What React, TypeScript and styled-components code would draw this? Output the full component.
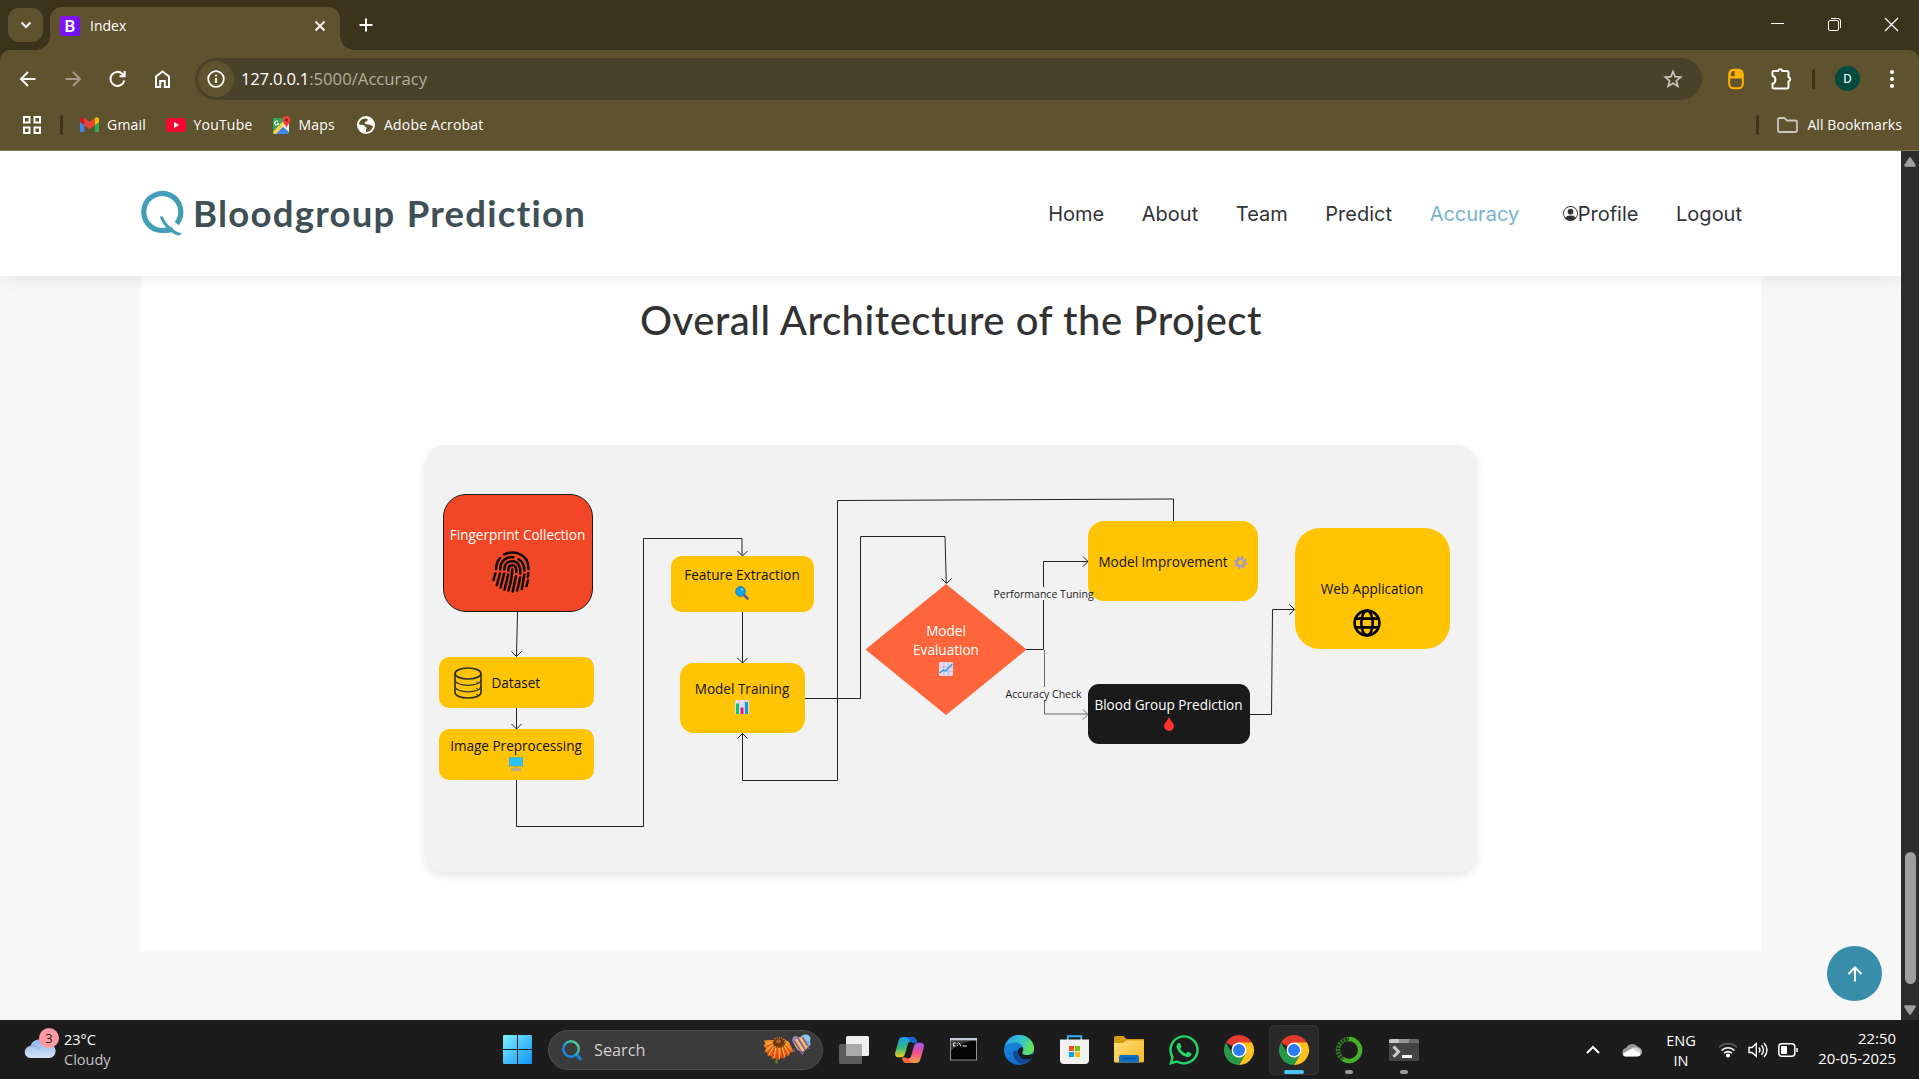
import React from 'react';
import styled, { createGlobalStyle, css } from 'styled-components';
import { FaWhatsapp } from 'react-icons/fa6';
import { BsPersonCircle } from 'react-icons/bs';

const uiFont = '"Open Sans", "Noto Sans", sans-serif';

const GlobalStyle = createGlobalStyle`
  * { box-sizing: border-box; }
  body { margin: 0; overflow: hidden; background: #f7f7f7; }
  svg { display: block; flex: none; overflow: visible; }
`;

const Screen = styled.div`
  display: flex;
  flex-direction: column;
  width: 1919px;
  height: 1079px;
  font-family: ${uiFont};
`;

/* ---------- browser chrome ---------- */

const TabStrip = styled.div`
  display: flex;
  align-items: flex-end;
  height: 50px;
  padding-left: 8px;
  background: #3c331d;
  color: #fff;
`;

const TabSearch = styled.div`
  position: relative;
  z-index: 1;
  display: grid;
  place-items: center;
  width: 35px;
  height: 34px;
  margin-bottom: 8px;
  border-radius: 11px;
  background: #5f522e;
`;

const Tab = styled.div`
  position: relative;
  display: flex;
  align-items: center;
  width: 290px;
  height: 43px;
  margin-left: 7px;
  padding: 0 13px 6px 10px;
  border-radius: 12px 12px 0 0;
  background: #5f522e;

  &::before,
  &::after {
    content: '';
    position: absolute;
    bottom: 0;
    width: 14px;
    height: 14px;
  }
  &::before {
    left: -14px;
    background: radial-gradient(circle at 0 0, #3c331d 13.5px, #5f522e 14px);
  }
  &::after {
    right: -14px;
    background: radial-gradient(circle at 100% 0, #3c331d 13.5px, #5f522e 14px);
  }
`;

const Favicon = styled.div`
  display: grid;
  place-items: center;
  width: 20px;
  height: 20px;
  border-radius: 3px;
  background: linear-gradient(135deg, #9013fe, #6610f2);
  font: 600 17px/20px Roboto, sans-serif;
`;

const TabTitle = styled.span`
  flex: 1;
  margin-left: 10px;
  font-size: 14px;
`;

const NewTab = styled.div`
  display: grid;
  place-items: center;
  width: 35px;
  height: 34px;
  margin: 0 0 8px 8px;
`;

const WindowControls = styled.div`
  display: flex;
  align-items: center;
  height: 48px;
  margin-bottom: 2px;
  margin-left: auto;
  padding-right: 21px;
  gap: 44px;
`;

const Toolbar = styled.div`
  display: flex;
  align-items: center;
  height: 57px;
  padding: 0 0 0 18px;
  background: #5f522e;
  border-radius: 10px 10px 0 0;
  color: #fff;
`;

const ToolbarBack = styled.div`
  background: #3c331d;
`;

const NavButtons = styled.div`
  display: flex;
  gap: 25px;
  width: 177px;
`;

const Omnibox = styled.div`
  display: flex;
  align-items: center;
  width: 1507px;
  height: 42px;
  padding: 0 19px 0 3px;
  border-radius: 21px;
  background: #4a412a;
`;

const SiteInfo = styled.div`
  display: grid;
  place-items: center;
  width: 36px;
  height: 36px;
  margin-right: 7px;
  border-radius: 50%;
  background: #5f522e;
`;

const Url = styled.div`
  flex: 1;
  padding-top: 1px;
  font-size: 16.7px;
  line-height: 24px;
  color: #b5ada0;
  b { font-weight: 400; color: #fff; letter-spacing: -0.25px; }
`;

const Extensions = styled.div`
  display: flex;
  align-items: center;
  margin-left: 26px;
`;

const Divider = styled.div`
  width: 3px;
  height: 20px;
  border-radius: 2px;
  background: #3c331d;
`;

const PuzzleSlot = styled.div`
  margin: 0 18px 0 26px;
`;

const Avatar = styled.div`
  display: grid;
  place-items: center;
  width: 25px;
  height: 25px;
  margin: 0 28px 0 20px;
  border-radius: 50%;
  background: #004d40;
  font: 13px Roboto, sans-serif;
`;

const BookmarkBar = styled.div`
  display: flex;
  align-items: center;
  height: 44px;
  padding: 0 17px 8px 23px;
  border-bottom: 1px solid #85764f;
  background: #5f522e;
  color: #fff;
  & > ${Divider} { margin: 0 17px 0 19px; }
`;

const Bookmark = styled.div<{ $w: number; $gap: number }>`
  display: flex;
  align-items: center;
  gap: ${p => p.$gap}px;
  width: ${p => p.$w}px;
  font-size: 14px;
  letter-spacing: 0.2px;
  white-space: nowrap;
`;

const AllBookmarks = styled.div`
  display: flex;
  align-items: center;
  gap: 9px;
  margin-left: auto;
  font-size: 14px;
  letter-spacing: 0.1px;
  svg { margin-left: 9px; }
`;

/* ---------- web page ---------- */

const Viewport = styled.div`
  display: flex;
  height: 869px;
`;

const Page = styled.div`
  position: relative;
  display: flex;
  flex-direction: column;
  align-items: center;
  width: 1901px;
  background: #f7f7f7;
  overflow: hidden;
`;

const SiteHeader = styled.header`
  position: relative;
  z-index: 1;
  display: flex;
  align-items: center;
  justify-content: space-between;
  width: 100%;
  height: 125px;
  padding: 0 159px 0 141px;
  background: #fff;
  box-shadow: 0 0 18px rgba(0, 0, 0, 0.1);
`;

const Brand = styled.div`
  display: flex;
  align-items: center;
  gap: 9px;
  color: #3e5055;
`;

const BrandName = styled.span`
  padding-bottom: 2px;
  font: 700 36.5px/50px Lato, sans-serif;
  letter-spacing: 1.25px;
  word-spacing: 1px;
`;

const SiteNav = styled.nav`
  display: flex;
  gap: 37.6px;
  font: 20px/30px Inter, sans-serif;
`;

const NavLink = styled.a<{ $active?: boolean; $icon?: boolean }>`
  display: flex;
  align-items: center;
  margin-left: ${p => (p.$icon ? 6 : 0)}px;
  color: ${p => (p.$active ? '#76b5cc' : '#313336')};
`;

const Section = styled.main`
  display: flex;
  flex-direction: column;
  align-items: center;
  width: 1620px;
  height: 675px;
  padding-top: 19px;
  background: #fff;
`;

const Heading = styled.h2`
  margin: 0;
  padding-left: 1px;
  color: #323232;
  font: 500 40px/50px Lato, sans-serif;
  letter-spacing: 0.53px;
`;

const DiagramCard = styled.div`
  position: relative;
  width: 1052px;
  height: 427px;
  margin-top: 100px;
  border-radius: 20px;
  background: #f2f2f2;
  box-shadow: 0 4px 10px rgba(0, 0, 0, 0.1);
  font: 13.55px/19px "Open Sans", sans-serif;
`;

const Connectors = styled.svg`
  position: absolute;
  inset: 0;
`;

type Tone = 'amber' | 'red' | 'dark';
const tones = {
  amber: css`background: #ffc504; color: #111;`,
  red: css`background: #f24726; color: #fff; border: 1px solid #1a1a1a;`,
  dark: css`background: #1a1a1a; color: #fff;`,
};

const Node = styled.div<{ $x: number; $y: number; $w: number; $h: number; $r: number; $tone?: Tone; $row?: boolean; $drop?: number; $gap?: number }>`
  position: absolute;
  left: ${p => p.$x}px;
  top: ${p => p.$y}px;
  display: flex;
  flex-direction: ${p => (p.$row ? 'row' : 'column')};
  align-items: center;
  justify-content: ${p => (p.$row ? 'center' : 'flex-start')};
  gap: ${p => p.$gap ?? 1}px;
  width: ${p => p.$w}px;
  height: ${p => p.$h}px;
  padding-top: ${p => p.$drop ?? 0}px;
  border-radius: ${p => p.$r}px;
  white-space: nowrap;
  ${p => tones[p.$tone ?? 'amber']}
`;

const DatasetNode = styled(Node)`
  justify-content: flex-start;
  padding-left: 15px;
`;

const ShiftedIcon = styled.div<{ $left: number }>`
  margin-right: ${p => p.$left * 2}px;
`;

const Decision = styled.div`
  position: absolute;
  left: 441px;
  top: 139px;
  display: flex;
  flex-direction: column;
  align-items: center;
  width: 161px;
  height: 131px;
  padding-top: 38px;
  clip-path: polygon(50% 0, 100% 50%, 50% 100%, 0 50%);
  background: #ff653b;
  color: #fff;
  text-align: center;
  svg { margin-top: 2px; }
`;

const EdgeLabel = styled.span<{ $x: number; $y: number }>`
  position: absolute;
  left: ${p => p.$x}px;
  top: ${p => p.$y}px;
  color: #1a1a1a;
  font-size: 10.55px;
  line-height: 14px;
  white-space: nowrap;
`;

const ToTop = styled.div`
  position: absolute;
  right: 19px;
  bottom: 19px;
  display: grid;
  place-items: center;
  width: 55px;
  height: 55px;
  border-radius: 50%;
  background: #388da8;
`;

const Scrollbar = styled.div`
  display: flex;
  flex-direction: column;
  align-items: center;
  width: 18px;
  padding: 6px 0 5px;
  background: #2c2c2c;
`;

const Thumb = styled.div`
  width: 11px;
  height: 132px;
  margin: auto 0 21px;
  border-radius: 6px;
  background: #9f9f9f;
`;

/* ---------- taskbar ---------- */

const Taskbar = styled.footer`
  display: flex;
  align-items: center;
  height: 59px;
  background: #1c1c1c;
  color: #fff;
  font-size: 14.5px;
  line-height: 20px;
`;

const Weather = styled.div`
  display: flex;
  align-items: center;
  gap: 5px;
  width: 490px;
  padding-left: 25px;
  span { color: #c4c4c4; }
`;

const CloudBadge = styled.div`
  position: relative;
  width: 34px;
  height: 40px;
  padding-top: 8px;
`;

const Badge = styled.div`
  position: absolute;
  right: 0;
  top: -2px;
  display: grid;
  place-items: center;
  width: 20px;
  height: 20px;
  border-radius: 50%;
  background: #ff99a4;
  color: #222;
  font-size: 13px;
`;

const AppSlot = styled.div<{ $active?: boolean }>`
  position: relative;
  display: grid;
  place-items: center;
  width: 50px;
  height: 50px;
  margin: 0 2.5px;
  border-radius: 6px;
  ${p => p.$active && css`
    background: #292929;
    box-shadow: inset 0 0 0 1px #333;
  `}
`;

const Running = styled.i<{ $active?: boolean }>`
  position: absolute;
  bottom: 1px;
  width: ${p => (p.$active ? 20 : 8)}px;
  height: 4px;
  border-radius: 2px;
  background: ${p => (p.$active ? '#4cc2ff' : '#9a9a9a')};
`;

const SearchBox = styled.div`
  display: flex;
  align-items: center;
  width: 275px;
  height: 40px;
  margin: 0 3.5px 0 3px;
  padding: 0 11px 0 13px;
  border: 1px solid #4f4f4f;
  border-radius: 20px;
  background: #3b3b3b;
  color: #d0d0d0;
  font-size: 16.3px;
`;

const SearchText = styled.span`
  flex: 1;
  margin-left: 12px;
`;

const Tray = styled.div`
  display: flex;
  align-items: center;
  margin-left: auto;
  padding-right: 23px;
`;

const Language = styled.div`
  width: 60px;
  margin: 3px 7px 0 8px;
  text-align: center;
`;

const Status = styled.div`
  display: flex;
  align-items: center;
  gap: 10px;
`;

const Clock = styled.div`
  width: 98px;
  margin-bottom: 3px;
  font-size: 14.9px;
  text-align: right;
`;

const Stack = styled.div`
  display: flex;
  flex-direction: column;
`;

/* ---------- icons ---------- */

const white = { fill: 'none', stroke: '#fff', strokeWidth: 2 };

const BackIcon = ({ dim }: { dim?: boolean }) => (
  <svg width="20" height="20" viewBox="0 0 20 20" {...white} opacity={dim ? 0.42 : 1} transform={dim ? 'scale(-1 1)' : undefined}>
    <path d="M17.5 10H3.5M10 3 3 10l7 7" />
  </svg>
);

const GmailIcon = () => (
  <svg width="19" height="15" viewBox="0 0 19 15">
    <path d="M0 3h4.3v12H1.5A1.5 1.5 0 0 1 0 13.500z" fill="#4285f4" />
    <path d="M14.700 3H19v10.500a1.500 1.500 0 0 1-1.500 1.500h-2.800z" fill="#34a853" />
    <path d="M14.700 1.200C16.500-.5 19 .5 19 2.500V5l-4.300 3.200z" fill="#fbbc04" />
    <path d="M4.300 1.200C2.500-.5 0 .5 0 2.500V5l4.300 3.200z" fill="#c5221f" />
    <path d="M4.300 1.200 9.500 5l5.200-3.800v7L9.500 12 4.300 8.200z" fill="#ea4335" />
  </svg>
);

const YoutubeIcon = () => (
  <svg width="20" height="14" viewBox="0 0 20 14">
    <rect width="20" height="14" rx="3.500" fill="#ff0033" />
    <path d="M8 4v6l5-3z" fill="#fff" />
  </svg>
);

const MapsIcon = () => (
  <svg width="18" height="18" viewBox="0 0 18 18">
    <rect y="2" width="16" height="16" rx="1.500" fill="#34a853" />
    <path d="M1 18 9 9l7 9z" fill="#4285f4" />
    <path d="m0 16 11-12 3 3L3 18H1z" fill="#fbd04a" />
    <path d="m9 10 5-4 2 2v8z" fill="#e8eaed" />
    <path d="M5 5.500a2 2 0 1 0 .6 2H4" fill="none" stroke="#fff" strokeWidth="1.100" />
    <path d="M13.500 0a4 4 0 0 1 4 4c0 3-3 4-4 8-1-4-4-5-4-8a4 4 0 0 1 4-4z" fill="#ea4335" />
    <circle cx="13.500" cy="4" r="1.500" fill="#8c1d18" />
  </svg>
);

const AcrobatGlobe = () => (
  <svg width="18" height="18" viewBox="0 0 18 18">
    <circle cx="9" cy="9" r="9" fill="#fff" />
    <path d="M7.500 2.500C4 3 2 6 2 8.500l4 .5c2 0 1.500 2 3.500 2.500.5 1-1 2-.5 4.500 4 0 6.500-3 7-6-2 0-3-2-5-1.500C9 8.500 7 7.500 8 6c2-.5 3-1 2.500-3.300z" fill="#5f522e" />
    <path d="M7.500 10.500 3 9.500c0 3 2 5.500 5 6.300z" fill="#fff" />
  </svg>
);

const QLogo = () => (
  <svg width="43" height="46" viewBox="0 0 43 46" fill="none" stroke="#439db8" strokeWidth="5.200">
    <path d="M35.700 32.600A18.500 18.500 0 1 0 21 39.500c4 0 7-.6 10.500-.8" />
    <path d="M18.800 25.500h3c1.500 4 4.500 8.200 8.500 11.300 3 2.600 6 4.800 10.500 5.800-1.500 2.300-4.500 2.300-7.500.5-7-4.500-12-10-14.500-17.600z" fill="#439db8" stroke="none" />
  </svg>
);

const FingerprintIcon = () => (
  <svg width="38" height="42" viewBox="0 0 38 42" fill="none" stroke="#0d0a08" strokeWidth="2.500" strokeLinecap="round">
    <path d="M12 3.500C20-.5 36.500 1 36.500 18" />
    <path d="M8 7Q4.300 11 4 18" />
    <path d="M8.200 18.500C8.300 9 15 5.300 21.500 6.200" />
    <path d="M26.500 8.300C31 11 32.500 15 32.400 19.500" />
    <path d="M12.300 18.500C12.500 12 16.500 10.200 20.500 10.200c5.500 0 8 4.300 7.800 12.300" />
    <path d="M16.300 19.500c0-3.500 1.800-5.200 4-5.200 3 0 4.200 2.300 4 6.700" />
    <path d="M20.300 18.500Q20 28 16.500 39.500" />
    <path d="M3.300 22.500 1.500 29M8 22.500 4.800 34M12.200 22.500 8.500 36.500M16.200 23.500 12.500 38.500M24 25 20.700 40.500M28.200 26.500 25.200 39.500M32.300 23.500 29.800 38M36.400 22l-.6 4M36 29.500 34.500 35" />
  </svg>
);

const GlobeIcon = () => (
  <svg width="28" height="28" viewBox="0 0 28 28" fill="none" stroke="#000" strokeWidth="2.600">
    <circle cx="14" cy="14" r="12.400" />
    <ellipse cx="14" cy="14" rx="5.700" ry="12.400" />
    <path d="M2.500 9.600h23M2.500 18.400h23" />
  </svg>
);

const DatabaseIcon = () => (
  <svg width="28" height="32" viewBox="0 0 28 32" fill="none" stroke="#333" strokeWidth="1.700">
    <ellipse cx="14" cy="6.500" rx="13" ry="5.500" />
    <path d="M1 6.500v19C1 28.500 6.500 31 14 31s13-2.500 13-5.500v-19" />
    <path d="M1 13c0 3 6 5.300 13 5.300S27 16 27 13M1 19.500c0 3 6 5.300 13 5.300s13-2.300 13-5.300" strokeWidth="1.200" />
    <path d="M23 14.500v1M23 21v1M23 27v1" strokeWidth="1.300" />
  </svg>
);

const MonitorEmoji = () => (
  <svg width="14" height="14" viewBox="0 0 14 14">
    <rect x=".3" y=".5" width="13.400" height="8.500" fill="#28c3ff" stroke="#4a9fd0" strokeWidth=".6" />
    <path d="M5 9.500h4v1H5z" fill="#c9a23e" />
    <rect x="2" y="11.200" width="10" height="2.600" rx=".5" fill="#b0a9a0" />
  </svg>
);

const MagnifierEmoji = () => (
  <svg width="14" height="14" viewBox="0 0 14 14">
    <path d="m9 9 3.500 3.500" stroke="#6a5590" strokeWidth="2.600" strokeLinecap="round" />
    <circle cx="5.500" cy="5.500" r="4.900" fill="#0aa5f0" stroke="#3f6f9f" strokeWidth=".9" />
    <circle cx="7" cy="3.500" r="1" fill="#8fe0ff" />
  </svg>
);

const BarsEmoji = () => (
  <svg width="14" height="14" viewBox="0 0 14 14">
    <rect width="14" height="14" rx="2" fill="#e8dff0" />
    <path d="M4.800 0v14M9.200 0v14M0 5h14M0 10h14" stroke="#cdbfd8" strokeWidth=".5" />
    <path d="M1 3.500h3V14H1z" fill="#00c873" />
    <path d="M5.500 7.500h3V14h-3z" fill="#f0127a" />
    <path d="M10 2h3v12h-3z" fill="#0a9be8" />
  </svg>
);

const TrendEmoji = () => (
  <svg width="14" height="14" viewBox="0 0 14 14">
    <rect width="14" height="14" rx="1.500" fill="#e2daf0" />
    <path d="M4.700 0v14M9.300 0v14M0 5h14M0 9.500h14" stroke="#b9aecb" strokeWidth=".6" />
    <path d="m.5 11 4-3 2 1L13.300 2" fill="none" stroke="#1b9ae8" strokeWidth="1.200" />
  </svg>
);

const GearEmoji = () => (
  <svg width="13" height="13" viewBox="0 0 13 13" fill="none" stroke="#aa9db8">
    <circle cx="6.500" cy="6.500" r="3.700" strokeWidth="2.600" />
    <circle cx="6.500" cy="6.500" r="5.600" strokeWidth="2" strokeDasharray="2.200 2.198" />
  </svg>
);

const DropEmoji = () => (
  <svg width="10" height="14" viewBox="0 0 10 14">
    <path d="M5 0c1 3 5 6 5 9a5 5 0 0 1-10 0c0-3 4-6 5-9z" fill="#f9312f" />
  </svg>
);

const ChromeIcon = () => (
  <svg width="30" height="30" viewBox="0 0 30 30">
    <path d="M15 15 2 7.500A15 15 0 0 1 28 7.500z" fill="#e33b2e" />
    <path d="M15 7.500h13A15 15 0 0 1 15 30l6.500-11.200z" fill="#fcc31e" />
    <path d="M2 7.500A15 15 0 0 0 15 30l6.500-11.300L8.500 18.700z" fill="#28994a" />
    <circle cx="15" cy="15" r="7.500" fill="#fff" />
    <circle cx="15" cy="15" r="6" fill="#2a7cf0" />
  </svg>
);

const StartIcon = () => (
  <svg width="29" height="29" viewBox="0 0 29 29">
    <defs>
      <linearGradient id="win" gradientUnits="userSpaceOnUse" x1="0" y1="0" x2="29" y2="29">
        <stop stopColor="#7df0fc" /><stop offset="1" stopColor="#0f93f7" />
      </linearGradient>
    </defs>
    <path d="M0 1q0-1 1-1h13v14H0zM15 0h13q1 0 1 1v13H15zM0 15h14v14H1q-1 0-1-1zM15 15h14v13q0 1-1 1H15z" fill="url(#win)" />
  </svg>
);

const SearchIcon = () => (
  <svg width="20" height="20" viewBox="0 0 20 20" fill="none">
    <defs>
      <linearGradient id="lens" x1="0" y1="1" x2="1" y2="0">
        <stop offset=".3" stopColor="#1b86dc" /><stop offset="1" stopColor="#5fe08e" />
      </linearGradient>
    </defs>
    <path d="m14.500 14.500 4 4.500" stroke="#1683dd" strokeWidth="3" strokeLinecap="round" />
    <circle cx="9" cy="9" r="7.700" stroke="url(#lens)" strokeWidth="2.500" />
  </svg>
);

const SearchArt = () => (
  <svg width="48" height="30" viewBox="0 0 48 30">
    <defs>
      <linearGradient id="petal" x1="0" y1="0" x2="0" y2="1">
        <stop stopColor="#f9a02c" /><stop offset="1" stopColor="#e2431a" />
      </linearGradient>
    </defs>
    <path d="M13.500 22v6.500" stroke="#5c8a1c" strokeWidth="2" />
    <path d="M9 5 1 5.500l1.500 3L.5 11l2.500 2-1.500 4 3 .5v4l3.500-.5 1.500 3.500 3-1.500 3.500 2 2-2.500 3.500 1.500 1-3.500 3.500.5.500-3.500 4-.5-1.500-4-3-6-5-3z" fill="url(#petal)" />
    <path d="M9 8 3 8.500M9 10l-6 5.500M10.500 11l-4.500 9M13 12l-2 11M16 12.500l.5 11.500M19 12l3 10M21.500 11l4.500 8M23 9l5 5.500" stroke="#ffc04a" strokeWidth=".9" />
    <path d="M9 9l-6 3M10 11l-5 7M12 12l-3.500 10M14.500 12.500 14 24M18 12l2 11M20.500 11.500l4 9.500M22.500 10.500l5.500 6.500" stroke="#c9340f" strokeWidth=".7" />
    <ellipse cx="16" cy="7.500" rx="6.500" ry="5.500" fill="#6d3512" />
    <ellipse cx="16" cy="7.500" rx="6" ry="5" fill="none" stroke="#d68a2a" strokeWidth="1.400" strokeDasharray="1 1.300" />
    <ellipse cx="15.500" cy="6.500" rx="2.500" ry="2" fill="#a8642a" />
    <ellipse cx="42.500" cy="4" rx="5" ry="4.500" fill="#8cc8f5" />
    <ellipse cx="45" cy="8.500" rx="2.600" ry="3" fill="#6fb4ea" />
    <ellipse cx="32.500" cy="5" rx="3.200" ry="4" fill="#9a83c4" />
    <g transform="rotate(-32 38 9)">
      <rect x="32" y="2" width="12" height="14.500" rx="5.500" fill="#f6c25c" />
      <path d="M34 2.800v13M38.500 2v14.500M42.700 4v10" stroke="#8560a8" strokeWidth="1.900" />
    </g>
    <path d="M31 14q-.5 3 1 3.500M38 17l1.500 2.500 1-3M45 12l1.500 2" fill="none" stroke="#8f77b8" />
  </svg>
);

const TaskViewIcon = () => (
  <svg width="30" height="28" viewBox="0 0 30 28">
    <rect y="8" width="23" height="20" rx="1.500" fill="#5c5c5c" />
    <rect x="7" width="23" height="20" rx="1.500" fill="#efefef" />
    <path d="M7 8h16v12H7z" fill="#aaa" />
  </svg>
);

const CopilotIcon = () => (
  <svg width="29" height="26" viewBox="0 0 29 26">
    <defs>
      <linearGradient id="cpA" x1="0" y1="0" x2="0" y2="1">
        <stop stopColor="#1f9bf0" /><stop offset=".55" stopColor="#35b87c" /><stop offset="1" stopColor="#f2cf1a" />
      </linearGradient>
      <linearGradient id="cpB" x1="0" y1="0" x2="0" y2="1">
        <stop stopColor="#a25af0" /><stop offset=".5" stopColor="#ee4f8a" /><stop offset="1" stopColor="#fba04a" />
      </linearGradient>
    </defs>
    <path d="M8 0h9c3 0 4 1.500 5 5l-6-.5c-2 0-2.800 1-3.300 3L10 17c-.8 2.300-2 3.300-4 3.300H3.500C.5 20.300-.3 18 .2 15.500L3.500 4C4.200 1.500 5.500 0 8 0z" fill="url(#cpA)" />
    <path d="M9 0h8c3 0 4 2 5 6h-4c-2.500 0-4-6-9-6z" fill="#1761d6" />
    <path d="M21 26h-9c-3 0-4-1.500-5-5l6 .5c2 0 2.800-1 3.300-3L19 9c.8-2.300 2-3.300 4-3.300h2.500c3 0 3.800 2.300 3.300 4.800L25.500 22c-.7 2.500-2 4-4.500 4z" fill="url(#cpB)" />
    <path d="M20 26h-8c-3 0-4-2-5-5.500h3.500c3 0 4 5.500 9.500 5.500z" fill="#f56a45" />
  </svg>
);

const CmdIcon = () => (
  <svg width="28" height="23" viewBox="0 0 28 23">
    <rect x=".5" y=".5" width="26" height="21.500" fill="#050505" stroke="#8d929b" />
    <path d="M1 3h20C12 5 5 8 1 13z" fill="#3a3a3a" />
    <path d="M0 0h27v2.500H0z" fill="#c5cbd4" />
    <path d="M5.500 5H3.500v3h2M7.500 5v.6M7.500 7.400V8M9 4.700l1.800 3.300M12.500 8H17" stroke="#eee" fill="none" />
  </svg>
);

const EdgeIcon = () => (
  <svg width="30" height="30" viewBox="0 0 30 30">
    <defs>
      <linearGradient id="edA" x1="0" y1=".3" x2="1" y2=".6">
        <stop stopColor="#2aa7e8" /><stop offset=".55" stopColor="#37c6c8" /><stop offset="1" stopColor="#6ee64c" />
      </linearGradient>
      <linearGradient id="edB" x1="0" y1="0" x2=".3" y2="1">
        <stop stopColor="#1b8ee0" /><stop offset="1" stopColor="#0f6fcb" />
      </linearGradient>
    </defs>
    <circle cx="15" cy="15" r="15" fill="url(#edB)" />
    <path d="M1 11C4 3 10 0 15 0c9 0 15 6.500 15 13 0 5-3.500 7-7.500 7-4 0-5-1.500-4-3 2.500-4-1-9.500-7.500-9.500C6 7.500 2.500 9 1 11z" fill="url(#edA)" />
    <path d="M9 18c0 6 5 11.500 12 10.500 3-1 5.500-3 7-5.500-2 1-4 1.500-6.500 1.500-5 0-8.500-4-7.500-9-3 0-5 .5-5 2.500z" fill="#14489a" />
    <path d="M22.500 20c-4 0-5-1.500-4-3 1-1.600.8-3.400-.3-5-3 .6-4.700 3-4.400 5.500.5 4 4 7 8 7 2.500 0 5-.7 7-2.500l1.200 1V18.500C28.500 19.800 25 20 22.500 20z" fill="#1c1c1c" />
  </svg>
);

const StoreIcon = () => (
  <svg width="29" height="29" viewBox="0 0 29 29">
    <path d="M7.800 6V1.200h13.400V6" fill="none" stroke="#2fb2f0" strokeWidth="2" />
    <path d="M0 4.500h29V25a4 4 0 0 1-4 4H4a4 4 0 0 1-4-4z" fill="#f1f1f1" />
    <path d="M9 11h5v5H9z" fill="#f1511b" /><path d="M15 11h5v5h-5z" fill="#80bb05" />
    <path d="M9 17h5v5H9z" fill="#05a6f0" /><path d="M15 17h5v5h-5z" fill="#fbb908" />
  </svg>
);

const ExplorerIcon = () => (
  <svg width="30" height="27" viewBox="0 0 30 27">
    <defs>
      <linearGradient id="fold" x1="0" y1="0" x2="1" y2="1">
        <stop stopColor="#ffe07a" /><stop offset="1" stopColor="#f9b820" />
      </linearGradient>
    </defs>
    <path d="M0 1.500Q0 0 1.500 0h8l3 3H30v6H0z" fill="#d99a0a" />
    <path d="M0 7h9l3.500-2.500H30V25q0 1.500-1.500 1.500h-27Q0 26.500 0 25z" fill="url(#fold)" />
    <path d="M5 26.500V21q0-2 2-2h16q2 0 2 2v5.500z" fill="#0f6fc5" />
    <path d="M8.500 22.500h13" stroke="#084a8c" />
  </svg>
);

const AnacondaIcon = () => (
  <svg width="28" height="28" viewBox="0 0 28 28" fill="none">
    <path d="M14 3a11 11 0 1 1-6 20.200" stroke="#43b02a" strokeWidth="4.500" />
    <path d="M14 3A11 11 0 0 0 8 23.200" stroke="#357f26" strokeWidth="4.500" strokeDasharray="2.200 1" />
    <path d="M14 3A11 11 0 0 0 8 23.200" stroke="#1c1c1c" strokeWidth="1" strokeDasharray="1.500 1.500" />
  </svg>
);

const TerminalIcon = () => (
  <svg width="30" height="22" viewBox="0 0 30 22">
    <rect width="30" height="22" rx="1.500" fill="#454545" />
    <path d="M1.500 0H10v4H0V1.500Q0 0 1.500 0z" fill="#c9c7c5" />
    <path d="M10 0h10v4H10z" fill="#989390" /><path d="M20 0h8.500Q30 0 30 1.500V4H20z" fill="#6a6a6a" />
    <path d="m4.500 7.500 5 5.300-5 5" fill="none" stroke="#ccc" strokeWidth="3" />
    <path d="M13 16h10v3H13z" fill="#f2f2f2" />
  </svg>
);

/* ---------- sections ---------- */

const BrowserChrome = () => (
  <>
    <TabStrip>
      <TabSearch>
        <svg width="12" height="12" viewBox="0 0 12 12" {...white}><path d="m1.500 3.500 4.500 4.500 4.500-4.500" /></svg>
      </TabSearch>
      <Tab>
        <Favicon>B</Favicon>
        <TabTitle>Index</TabTitle>
        <svg width="14" height="14" viewBox="0 0 14 14" {...white} strokeWidth="1.800"><path d="m2.500 2.500 9 9m0-9-9 9" /></svg>
      </Tab>
      <NewTab>
        <svg width="14" height="14" viewBox="0 0 14 14" {...white}><path d="M7 .5v13M.5 7h13" /></svg>
      </NewTab>
      <WindowControls>
        <svg width="13" height="13" viewBox="0 0 13 13" {...white} strokeWidth="1"><path d="M0 5.500h13" /></svg>
        <svg width="13" height="13" viewBox="0 0 13 13" {...white} strokeWidth="1">
          <rect x=".5" y="2.500" width="10" height="10" rx="1.500" /><path d="M3 .5h7a2.500 2.500 0 0 1 2.500 2.500v7" />
        </svg>
        <svg width="13" height="13" viewBox="0 0 13 13" {...white} strokeWidth="1.200"><path d="m0 0 13 13M13 0 0 13" /></svg>
      </WindowControls>
    </TabStrip>
    <ToolbarBack>
      <Toolbar>
        <NavButtons>
          <BackIcon />
          <BackIcon dim />
          <svg width="20" height="20" viewBox="0 0 20 20" {...white}>
            <path d="M16.300 11.500A7 7 0 1 1 14.200 4.700L16.500 7" /><path d="M16.700 2v5.300H11.500" />
          </svg>
          <svg width="20" height="20" viewBox="0 0 20 20" {...white}><path d="M3 18V7.500L9.500 2.500l6.500 5V18h-4.200v-6H7.200v6z" /></svg>
        </NavButtons>
        <Omnibox>
          <SiteInfo>
            <svg width="18" height="18" viewBox="0 0 18 18" {...white} strokeWidth="1.800"><circle cx="9" cy="9" r="7.800" /><path d="M9 8v5M9 4.800v1.800" /></svg>
          </SiteInfo>
          <Url><b>127.0.0.1</b>:5000/Accuracy</Url>
          <svg width="20" height="20" viewBox="0 0 20 20" fill="none" stroke="#c9c5bf" strokeWidth="1.700">
            <path d="m10 2.500 2.100 5.200 5.600.4-4.300 3.600 1.400 5.500L10 14.200l-4.800 3 1.400-5.500-4.300-3.600 5.600-.4z" />
          </svg>
        </Omnibox>
        <Extensions>
          <svg width="16" height="22" viewBox="0 0 16 22" fill="none">
            <rect x="1.200" y="1.700" width="13.600" height="18.600" rx="4.500" stroke="#ffb300" strokeWidth="2" />
            <path d="M1 10.500V6a5 5 0 0 1 5-5h4a5 5 0 0 1 5 5v4.500z" fill="#ffb300" />
            <path d="M3.200 8.200V6A3 3 0 0 1 6.500 3v5.200z" fill="#5f522e" />
          </svg>
          <PuzzleSlot>
            <svg width="24" height="24" viewBox="0 0 24 24" {...white}>
              <path d="M3.500 4H8a2.300 2.300 0 0 1 4.400 0H17q1.500 0 1.500 1.500V10a2.400 2.400 0 0 1 0 4.600V20q0 1.500-1.500 1.500H4Q2.500 21.500 2.500 20v-3.200c3.800-.8 3.800-7.200 0-8V5q0-1 1-1z" />
            </svg>
          </PuzzleSlot>
          <Divider />
          <Avatar>D</Avatar>
          <svg width="8" height="20" viewBox="0 0 8 20" fill="#fff"><circle cx="4" cy="3" r="2.100" /><circle cx="4" cy="10" r="2.100" /><circle cx="4" cy="17" r="2.100" /></svg>
        </Extensions>
      </Toolbar>
    </ToolbarBack>
    <BookmarkBar>
      <svg width="18" height="18" viewBox="0 0 18 18" {...white}>
        <path d="M1 1h5.500v5.500H1zM11.500 1H17v5.500h-5.500zM1 11.500h5.500V17H1zM11.500 11.500H17V17h-5.500z" />
      </svg>
      <Divider />
      <Bookmark $w={86} $gap={8}><GmailIcon />Gmail</Bookmark>
      <Bookmark $w={106.5} $gap={7.5}><YoutubeIcon />YouTube</Bookmark>
      <Bookmark $w={84.5} $gap={8}><MapsIcon />Maps</Bookmark>
      <Bookmark $w={140} $gap={9}><AcrobatGlobe />Adobe Acrobat</Bookmark>
      <AllBookmarks>
        <Divider />
        <svg width="21" height="16" viewBox="0 0 21 16" fill="none" stroke="#c9c5bf" strokeWidth="1.800">
          <path d="M1 2.500Q1 1 2.500 1h5l2.500 2.500h8.500q1.500 0 1.500 1.500v8.500q0 1.500-1.500 1.500h-16Q1 15 1 13.500z" />
        </svg>
        All Bookmarks
      </AllBookmarks>
    </BookmarkBar>
  </>
);

const Diagram = () => (
  <DiagramCard>
    <Connectors width="1052" height="428" viewBox="425 445 1052 428" fill="none" stroke="#222" strokeWidth="1">
      <path d="M517.500 612 516.500 656M511.500 651.500l5 5 5-5" />
      <path d="M516.500 708v21M511.500 724l5 5 5-5" />
      <path d="M516.500 780v46.500h127v-288h98.500v17M737.500 551l5 5 5-5" />
      <path d="M742.500 612v51M737.500 658l5 5 5-5" />
      <path d="M804 698.500h56.500v-162H945l1.300 47M941.500 578.500l5 5 5-5" />
      <path d="M1173.500 521v-22l-336 1.500v280h-95v-47M737.500 738.500l5-5 5 5" />
      <path d="M1026 649.500h17.500V600M1043.500 587v-25.500H1088M1083 556.500l5 5-5 5" />
      <path d="M1044.500 650v37M1044.500 700v14h43M1083 709.500l5 5-5 5" stroke="#666" />
      <path d="M1249 714.500h22.500l1-105h22M1289.500 604.500l5 5-5 5" />
    </Connectors>
    <Node $x={18} $y={49} $w={150} $h={118} $r={23} $tone="red" $drop={31} $gap={6}>
      Fingerprint Collection
      <ShiftedIcon $left={7}><FingerprintIcon /></ShiftedIcon>
    </Node>
    <DatasetNode $x={14} $y={212} $w={155} $h={51} $r={10} $row $drop={1} $gap={10}>
      <DatabaseIcon />Dataset
    </DatasetNode>
    <Node $x={14} $y={284} $w={155} $h={51} $r={10} $drop={8}>Image Preprocessing<MonitorEmoji /></Node>
    <Node $x={246} $y={111} $w={143} $h={56} $r={11} $drop={10}>Feature Extraction<MagnifierEmoji /></Node>
    <Node $x={255} $y={218} $w={125} $h={70} $r={14} $drop={17}>Model Training<BarsEmoji /></Node>
    <Decision>
      Model<br />Evaluation
      <TrendEmoji />
    </Decision>
    <Node $x={663} $y={76} $w={170} $h={80} $r={16} $row $drop={2} $gap={6}>Model Improvement<GearEmoji /></Node>
    <Node $x={663} $y={239} $w={162} $h={60} $r={11} $tone="dark" $drop={12} $gap={2}>Blood Group Prediction<DropEmoji /></Node>
    <Node $x={870} $y={83} $w={155} $h={121} $r={25} $drop={52} $gap={10}>
      Web Application
      <ShiftedIcon $left={5}><GlobeIcon /></ShiftedIcon>
    </Node>
    <EdgeLabel $x={569} $y={142}>Performance Tuning</EdgeLabel>
    <EdgeLabel $x={581} $y={242}>Accuracy Check</EdgeLabel>
  </DiagramCard>
);

const WebPage = () => (
  <Viewport>
    <Page>
      <SiteHeader>
        <Brand><QLogo /><BrandName>Bloodgroup Prediction</BrandName></Brand>
        <SiteNav>
          <NavLink>Home</NavLink>
          <NavLink>About</NavLink>
          <NavLink>Team</NavLink>
          <NavLink>Predict</NavLink>
          <NavLink $active>Accuracy</NavLink>
          <NavLink $icon><BsPersonCircle size={15} />Profile</NavLink>
          <NavLink>Logout</NavLink>
        </SiteNav>
      </SiteHeader>
      <Section>
        <Heading>Overall Architecture of the Project</Heading>
        <Diagram />
      </Section>
      <ToTop>
        <svg width="16" height="16" viewBox="0 0 16 16" {...white}><path d="M8 15.500V1.500M1.500 8 8 1.500 14.500 8" /></svg>
      </ToTop>
    </Page>
    <Scrollbar>
      <svg width="12" height="10" viewBox="0 0 12 10" fill="#9f9f9f"><path d="M5 .8q1-1.300 2 0l4.600 7q.8 2-1 2H1.400q-1.800 0-1-2z" /></svg>
      <Thumb />
      <svg width="12" height="10" viewBox="0 0 12 10" fill="#9f9f9f"><path d="M5 9.200q1 1.300 2 0l4.600-7q.8-2-1-2H1.400q-1.800 0-1 2z" /></svg>
    </Scrollbar>
  </Viewport>
);

const WindowsTaskbar = () => (
  <Taskbar>
    <Weather>
      <CloudBadge>
        <svg width="30" height="20" viewBox="0 0 30 20">
          <defs>
            <linearGradient id="cloud" x1="0" y1="0" x2="0" y2="1"><stop stopColor="#8fb2ec" /><stop offset="1" stopColor="#d3e2fa" /></linearGradient>
          </defs>
          <path d="M6 20a6 6 0 0 1-.5-12A9 9 0 0 1 22 6a7 7 0 0 1 3 14z" fill="url(#cloud)" />
          <path d="M5.500 8c4-1 7 .5 8.500 3" fill="none" stroke="#86a8e0" />
        </svg>
        <Badge>3</Badge>
      </CloudBadge>
      <Stack>23°C<span>Cloudy</span></Stack>
    </Weather>
    <AppSlot><StartIcon /></AppSlot>
    <SearchBox><SearchIcon /><SearchText>Search</SearchText><SearchArt /></SearchBox>
    <AppSlot><TaskViewIcon /></AppSlot>
    <AppSlot><CopilotIcon /></AppSlot>
    <AppSlot><CmdIcon /></AppSlot>
    <AppSlot><EdgeIcon /></AppSlot>
    <AppSlot><StoreIcon /></AppSlot>
    <AppSlot><ExplorerIcon /></AppSlot>
    <AppSlot><FaWhatsapp size={34} color="#25d366" /></AppSlot>
    <AppSlot><ChromeIcon /></AppSlot>
    <AppSlot $active><ChromeIcon /><Running $active /></AppSlot>
    <AppSlot><AnacondaIcon /><Running /></AppSlot>
    <AppSlot><TerminalIcon /><Running /></AppSlot>
    <Tray>
      <svg width="14" height="14" viewBox="0 0 14 14" {...white}><path d="m1 10 6-6 6 6" /></svg>
      <svg width="43" height="14" viewBox="2 0 43 14">
        <path d="M27 13.500a4.500 4.500 0 0 1 1-8.500 7 7 0 0 1 12-1 5 5 0 0 1 2 9z" fill="#9a9a9a" />
        <path d="M25 11q2-2 10-6l7 4.500q1 4-3 4H27q-2-.5-2-2.500z" fill="#fff" />
        <path d="M34 5.500q4-2.500 7.500.5 2 2 1 4.500z" fill="#d5d5d5" />
      </svg>
      <Language>ENG<br />IN</Language>
      <Status>
        <svg width="20" height="16" viewBox="0 0 20 16" {...white} strokeWidth="1.600">
          <path d="M1 5.500a12.500 12.500 0 0 1 18 0" stroke="#5a5a5a" /><path d="M3.500 8.500a9 9 0 0 1 13 0M6 11.300a5.600 5.600 0 0 1 8 0" />
          <circle cx="10" cy="13.500" r="1.300" fill="#fff" />
        </svg>
        <svg width="20" height="16" viewBox="0 0 20 16" {...white} strokeWidth="1.400">
          <path d="M1 5.500h3L8.300 1.500v13L4 10.500H1zM11 5.500q2 2.500 0 5M13.500 3.200q4 4.800 0 9.600M16 1q6 7 0 14" />
        </svg>
        <svg width="20" height="14" viewBox="0 0 20 14" {...white} strokeWidth="1.500">
          <rect x=".8" y=".8" width="16" height="12.400" rx="3" /><rect x="3" y="3" width="6" height="8" rx="1" fill="#fff" stroke="none" /><path d="M19 5v4" />
        </svg>
      </Status>
      <Clock>22:50<br />20-05-2025</Clock>
    </Tray>
  </Taskbar>
);

export default function App() {
  return (
    <Screen>
      <GlobalStyle />
      <BrowserChrome />
      <WebPage />
      <WindowsTaskbar />
    </Screen>
  );
}
